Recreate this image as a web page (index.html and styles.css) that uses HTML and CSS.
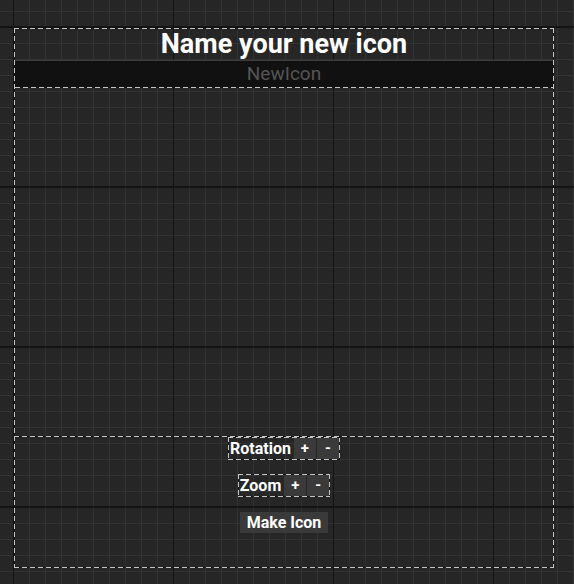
FILE: index.html
```html
<!DOCTYPE html>
<html>
<head>
<meta charset="utf-8">
<link rel="stylesheet" href="styles.css">
</head>
<body>
<div class="panel dashed">
  <div class="header">
    <div class="title">Name your new icon</div>
    <div class="name-input">NewIcon</div>
  </div>
  <div class="canvas"></div>
  <div class="controls dashed">
    <div class="row dashed">
      <span class="label">Rotation</span>
      <span class="btn">+</span>
      <span class="btn">-</span>
    </div>
    <div class="row dashed">
      <span class="label">Zoom</span>
      <span class="btn">+</span>
      <span class="btn">-</span>
    </div>
    <div class="make">Make Icon</div>
  </div>
</div>
</body>
</html>
```
FILE: styles.css
```css
html, body {
  margin: 0;
  padding: 0;
  height: 100%;
}
body {
  font-family: Roboto, "Liberation Sans", sans-serif;
  background-color: #262626;
  background-image:
    linear-gradient(90deg, #141414 1px, transparent 1px),
    linear-gradient(180deg, #141414 2px, transparent 2px),
    linear-gradient(90deg, #333333 1px, transparent 1px),
    linear-gradient(180deg, #333333 1px, transparent 1px);
  background-size: 160px 160px, 160px 160px, 16px 16px, 16px 16px;
  background-position: 13px 0, 0 26px, 13px 0, 0 11px;
  overflow: hidden;
}
.dashed {
  background-image:
    repeating-linear-gradient(90deg, #c4c4c4 0 5px, #161616 5px 8px),
    repeating-linear-gradient(90deg, #c4c4c4 0 5px, #161616 5px 8px),
    repeating-linear-gradient(180deg, #c4c4c4 0 5px, #161616 5px 8px),
    repeating-linear-gradient(180deg, #c4c4c4 0 5px, #161616 5px 8px);
  background-size: 100% 1px, 100% 1px, 1px 100%, 1px 100%;
  background-position: 0 0, 0 100%, 0 0, 100% 0;
  background-repeat: no-repeat;
}
.panel {
  box-sizing: border-box;
  margin: 28px 0 0 14px;
  width: 540px;
  height: 540px;
  padding: 1px;
  display: flex;
  flex-direction: column;
}
.header {
  height: 59px;
  display: flex;
  flex-direction: column;
  background-image: repeating-linear-gradient(90deg, #c4c4c4 0 5px, #161616 5px 8px);
  background-size: 100% 1px;
  background-position: 0 100%;
  background-repeat: no-repeat;
}
.title {
  height: 31px;
  line-height: 31px;
  text-align: center;
  color: #ffffff;
  font-weight: 700;
  font-size: 27px;
}
.name-input {
  height: 26px;
  line-height: 26px;
  border-top: 1px solid #3c3c3c;
  background: #111111;
  color: #555555;
  font-size: 19px;
  text-align: center;
}
.canvas {
  flex: 1;
}
.controls {
  height: 132px;
  box-sizing: border-box;
  margin: 0 -1px -1px;
  padding: 1px 1px 0;
  display: flex;
  flex-direction: column;
  align-items: center;
}
.row {
  display: flex;
  align-items: center;
  gap: 1px;
  padding: 1px 1px 1px 2px;
  height: 21px;
}
.row + .row {
  margin-top: 14px;
}
.label {
  color: #ffffff;
  font-weight: 700;
  font-size: 16px;
  padding-right: 2px;
}
.btn {
  width: 22px;
  height: 21px;
  line-height: 21px;
  background: #3a3a3a;
  color: #ffffff;
  font-weight: 700;
  font-size: 15px;
  text-align: center;
}
.make {
  margin-top: 15px;
  height: 21px;
  line-height: 21px;
  padding: 0 7px;
  background: #3a3a3a;
  color: #ffffff;
  font-weight: 700;
  font-size: 16px;
}
```
